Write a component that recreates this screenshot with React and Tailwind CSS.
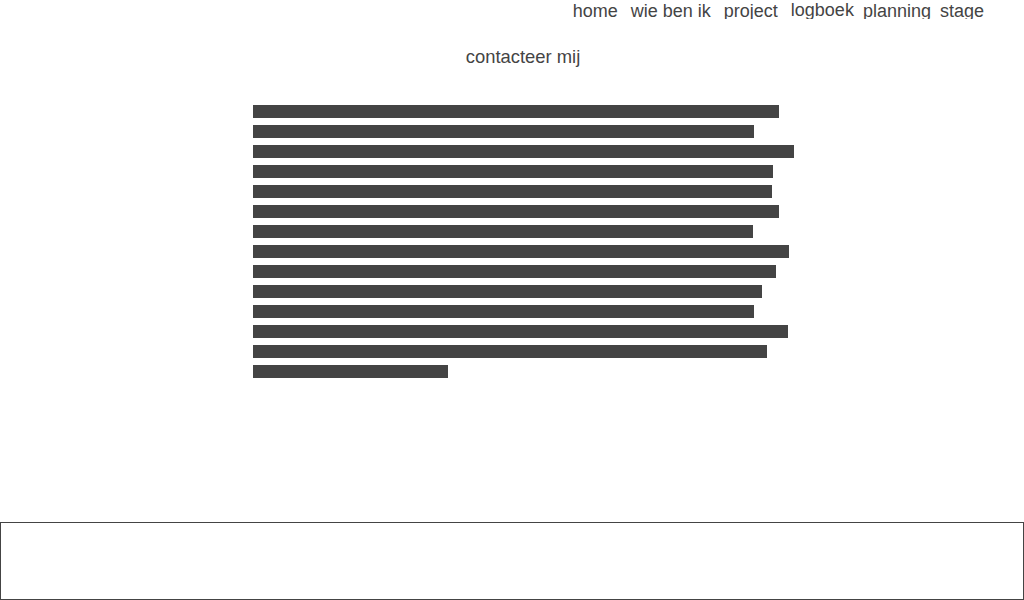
import React from 'react';

const bars = [526, 501, 541, 520, 519, 526, 500, 536, 523, 509, 501, 535, 514, 195];

const App = () => {
  return (
    <div className="w-[1024px] h-[600px] bg-white text-[#444] font-['Liberation_Sans',Arial,sans-serif] text-[18.4px] leading-normal overflow-hidden">
      {/* nav */}
      <nav className="flex justify-end pr-[40px] h-[19px] text-[18px] leading-[22px] overflow-hidden">
        <a className="block">home</a>
        <a className="block ml-[13px]">wie ben ik</a>
        <a className="block ml-[13px]">project</a>
        <a className="block ml-[13px] -translate-y-px">logboek</a>
        <a className="block ml-[9px]">planning</a>
        <a className="block ml-[9px]">stage</a>
      </nav>

      <div className="mt-[24px] pl-[22px] text-center h-[21px]">contacteer mij</div>

      {/* content placeholder */}
      <div className="mt-[41px] pl-[253px] flex flex-col gap-[7px]">
        {bars.map((w, i) => (
          <div key={i} className="h-[13px] bg-[#444]" style={{ width: w }} />
        ))}
      </div>

      <footer className="mt-[144px] h-[78px] w-full border border-[#444]"></footer>
    </div>
  );
};

export default App;
